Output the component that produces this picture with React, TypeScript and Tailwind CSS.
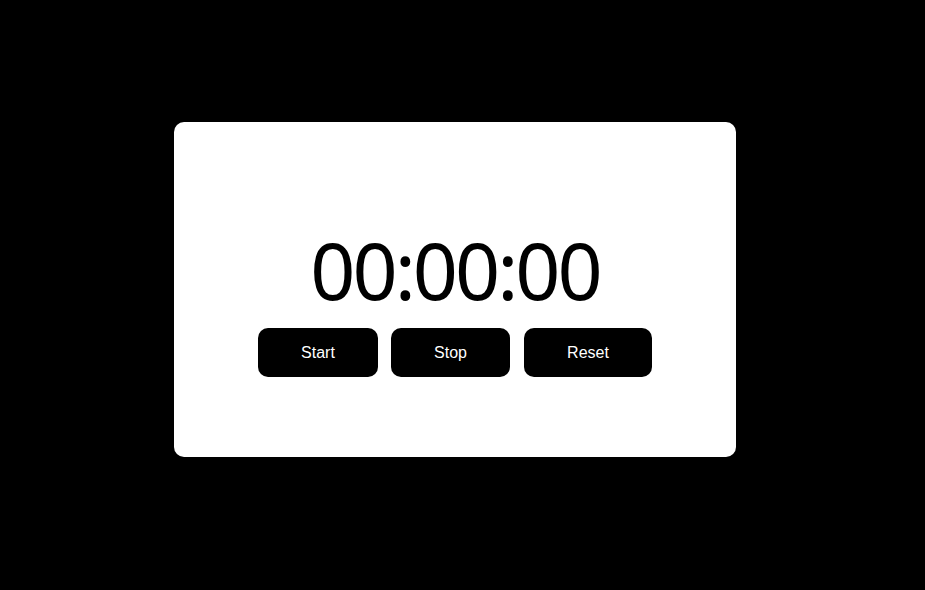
export default function App() {
  return (
    <div className="w-[925px] h-[590px] bg-black pt-[122px] pl-[174px]">
      <div className="w-[562px] h-[335px] bg-white rounded-[10px] flex flex-col items-center pt-[100px]">
        <div
          className="text-black text-[79px] leading-[96px] tracking-[-3px] pr-[-3px]"
          style={{ fontFamily: '"Noto Sans", "Open Sans", sans-serif' }}
        >
          00:00:00
        </div>
        <div
          className="flex gap-[13px] mt-[10px]"
          style={{ fontFamily: '"Liberation Sans", Arial, sans-serif' }}
        >
          <button className="w-[120px] h-[49px] bg-black text-white text-[16px] rounded-[10px]">Start</button>
          <button className="w-[119px] h-[49px] bg-black text-white text-[16px] rounded-[10px]">Stop</button>
          <button className="w-[128px] h-[49px] bg-black text-white text-[16px] rounded-[10px] ml-px">Reset</button>
        </div>
      </div>
    </div>
  );
}
